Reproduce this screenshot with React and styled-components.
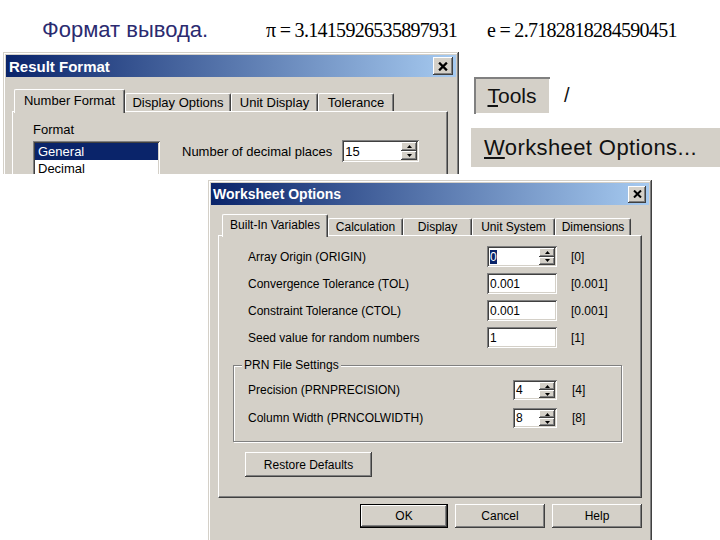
import React from "react";
import styled, { createGlobalStyle, css } from "styled-components";

// Win2000-like bevels
const raised = css`
  box-shadow: inset -1px -1px #404040, inset 1px 1px #fff, inset -2px -2px #808080,
    inset 2px 2px #d4d0c8;
`;
const sunken = css`
  box-shadow: inset 1px 1px #808080, inset -1px -1px #fff, inset 2px 2px #404040,
    inset -2px -2px #d4d0c8;
`;

const GlobalStyle = createGlobalStyle`
  html, body { margin: 0; padding: 0; background: #fff; }
  body { font-family: "Liberation Sans", Arial, sans-serif; }
`;

const Page = styled.div`
  width: 720px;
  height: 540px;
  overflow: hidden;
  background: #fff;
`;

const Header = styled.header`
  display: flex;
  align-items: baseline;
  height: 52px;
  box-sizing: border-box;
  padding: 17px 0 0 42px;
`;

const Heading = styled.h1`
  margin: 0;
  width: 224px;
  font: normal 22px "Liberation Sans", Arial, sans-serif;
  color: #2b2b70;
`;

const Constant = styled.span`
  width: ${(p) => p.$w || 230}px;
  font-family: "Liberation Serif", "Times New Roman", serif;
  font-size: 20px;
  letter-spacing: -0.7px;
  color: #000;
`;

const TopRow = styled.div`
  display: flex;
  align-items: flex-start;
  height: 122px;
`;

const Crop = styled.div`
  margin-left: 3px;
  height: 122px;
  overflow: hidden;
`;

const Dialog = styled.section`
  box-sizing: border-box;
  width: ${(p) => p.$w}px;
  height: ${(p) => p.$h}px;
  padding: 3px;
  background: #d4d0c8;
  font-family: "Liberation Sans", Arial, sans-serif;
  font-size: ${(p) => p.$size}px;
  color: #000;
  box-shadow: inset -1px -1px #404040, inset 1px 1px #d4d0c8, inset -2px -2px #808080,
    inset 2px 2px #fff;
`;

const WorksheetDialog = styled(Dialog)`
  margin: 6px 0 0 208px;
`;

const TitleBar = styled.div`
  display: flex;
  align-items: center;
  justify-content: space-between;
  height: 22px;
  padding: 0 3px 0 ${(p) => p.$pl || 2}px;
  background: linear-gradient(to right, #0a246a, #a6caf0);
  color: #fff;
  font-weight: bold;
  font-size: ${(p) => p.$size}px;
`;

const CloseButton = styled.div`
  display: flex;
  align-items: center;
  justify-content: center;
  width: ${(p) => p.$w}px;
  height: ${(p) => p.$h}px;
  background: #d4d0c8;
  ${raised};
`;

const Body = styled.div`
  padding: ${(p) => p.$pad};
`;

const TabStrip = styled.div`
  display: flex;
  align-items: flex-end;
  padding-left: ${(p) => p.$pl}px;
  position: relative;
  z-index: 1;
`;

const Tab = styled.div`
  box-sizing: border-box;
  display: flex;
  align-items: center;
  justify-content: center;
  width: ${(p) => p.$w}px;
  height: ${(p) => (p.$active ? p.$h + 2 : p.$h - 4)}px;
  margin-bottom: ${(p) => (p.$active ? -2 : 0)}px;
  padding-bottom: ${(p) => (p.$active ? 3 : 0)}px;
  background: #d4d0c8;
  border-top: 1px solid #fff;
  border-left: 1px solid #fff;
  border-right: 1px solid #404040;
  border-radius: 2px 2px 0 0;
  box-shadow: inset -1px 0 #808080;
  white-space: nowrap;
`;

const TabPanel = styled.div`
  box-sizing: border-box;
  height: ${(p) => p.$h}px;
  padding: ${(p) => p.$pad};
  border-top: 1px solid #fff;
  border-left: 1px solid #fff;
  border-right: 1px solid #404040;
  border-bottom: 1px solid #404040;
  box-shadow: inset -1px -1px #808080;
`;

/* Result Format contents */
const FormatRow = styled.div`
  display: flex;
  align-items: flex-start;
`;

const FormatColumn = styled.div`
  display: flex;
  flex-direction: column;
  gap: 4px;
`;

const ListBox = styled.div`
  box-sizing: border-box;
  width: 127px;
  height: 40px;
  padding: 2px 2px 0;
  background: #fff;
  ${sunken};
`;

const ListItem = styled.div`
  height: 17px;
  line-height: 17px;
  padding-left: 3px;
  background: ${(p) => (p.$selected ? "#0a246a" : "transparent")};
  color: ${(p) => (p.$selected ? "#fff" : "#000")};
`;

const DecimalsRow = styled.div`
  display: flex;
  align-items: center;
  gap: 10px;
  margin: 18px 0 0 22px;
`;

/* Edit & spin controls */
const Field = styled.div`
  box-sizing: border-box;
  display: flex;
  width: ${(p) => p.$w}px;
  height: ${(p) => p.$h}px;
  padding: 2px;
  background: #fff;
  ${sunken};
`;

const FieldText = styled.span`
  flex: 1;
  display: flex;
  align-items: center;
  padding-left: 1px;
`;

const Highlight = styled.span`
  background: #0a246a;
  color: #fff;
`;

const SpinButtons = styled.div`
  display: flex;
  flex-direction: column;
  width: 16px;
`;

const SpinButton = styled.div`
  flex: 1;
  display: flex;
  align-items: center;
  justify-content: center;
  background: #d4d0c8;
  ${raised};
`;

/* Worksheet Options contents */
const SettingsGrid = styled.div`
  display: grid;
  grid-template-columns: ${(p) => p.$label}px ${(p) => p.$field}px auto;
  column-gap: ${(p) => p.$gap}px;
  row-gap: ${(p) => p.$rowGap}px;
  align-items: center;
  margin-left: ${(p) => p.$ml || 0}px;
`;

const Default = styled.span`
  white-space: nowrap;
`;

const GroupBox = styled.fieldset`
  box-sizing: border-box;
  width: 389px;
  margin: 10px 0 0 0;
  padding: 8px 0 13px 14px;
  border: 1px solid #808080;
  box-shadow: 1px 1px 0 #fff, inset 1px 1px 0 #fff;
`;

const GroupLegend = styled.legend`
  margin-left: -6px;
  padding: 0 2px;
  background: #d4d0c8;
  line-height: 14px;
`;

const PushButton = styled.button`
  box-sizing: border-box;
  width: ${(p) => p.$w}px;
  height: ${(p) => p.$h}px;
  margin: 0;
  padding: 0;
  border: 0;
  background: #d4d0c8;
  font: 12px "Liberation Sans", Arial, sans-serif;
  color: #000;
  ${(p) =>
    p.$default
      ? css`
          box-shadow: inset 0 0 0 1px #000, inset -2px -2px #404040, inset 2px 2px #fff,
            inset -3px -3px #808080;
        `
      : raised};
`;

const RestoreButton = styled(PushButton)`
  display: block;
  margin: 10px 0 0 12px;
`;

const Footer = styled.div`
  display: flex;
  justify-content: flex-end;
  gap: 7px;
  margin-top: 6px;
`;

/* Right-hand menu excerpt */
const MenuColumn = styled.div`
  display: flex;
  flex-direction: column;
  margin-left: 12px;
  padding-top: 25px;
`;

const MenuRow = styled.div`
  display: flex;
  align-items: center;
  margin-left: 3px;
`;

const ToolsBox = styled.div`
  box-sizing: border-box;
  display: flex;
  align-items: center;
  justify-content: center;
  width: 76px;
  height: 37px;
  background: #d4d0c8;
  font-size: 21px;
  color: #111;
  box-shadow: inset 2px 2px #808080, inset -1px -1px #fff;
`;

const Slash = styled.span`
  margin-left: 14px;
  font-size: 20px;
  color: #111;
`;

const MenuItem = styled.div`
  box-sizing: border-box;
  display: flex;
  align-items: center;
  width: 249px;
  height: 39px;
  margin-top: 14px;
  padding-left: 13px;
  background: #d4d0c8;
  font-size: 22px;
  letter-spacing: 0.4px;
  color: #111;
`;

const CloseIcon = ({ size = 9 }) => (
  <svg width={size} height={size - 1} viewBox="0 0 9 8">
    <path d="M1 0.5 L8 7.5 M8 0.5 L1 7.5" stroke="#000" strokeWidth="2" />
  </svg>
);

const Arrow = ({ up }) => (
  <svg width="5" height="3" viewBox="0 0 5 3">
    <path d={up ? "M2.5 0 L5 3 L0 3 Z" : "M0 0 L5 0 L2.5 3 Z"} fill="#000" />
  </svg>
);

function Spin({ w, h, children }) {
  return (
    <Field $w={w} $h={h}>
      <FieldText>{children}</FieldText>
      <SpinButtons>
        <SpinButton>
          <Arrow up />
        </SpinButton>
        <SpinButton>
          <Arrow />
        </SpinButton>
      </SpinButtons>
    </Field>
  );
}

const resultTabs = [
  ["Number Format", 111],
  ["Display Options", 106],
  ["Unit Display", 87],
  ["Tolerance", 76],
];

const worksheetTabs = [
  ["Built-In Variables", 106],
  ["Calculation", 75],
  ["Display", 69],
  ["Unit System", 83],
  ["Dimensions", 76],
];

const variables = [
  ["Array Origin  (ORIGIN)", "0", "[0]", true],
  ["Convergence Tolerance  (TOL)", "0.001", "[0.001]"],
  ["Constraint Tolerance  (CTOL)", "0.001", "[0.001]"],
  ["Seed value for random numbers", "1", "[1]"],
];

const prnSettings = [
  ["Precision  (PRNPRECISION)", "4", "[4]"],
  ["Column Width  (PRNCOLWIDTH)", "8", "[8]"],
];

function App() {
  return (
    <>
      <GlobalStyle />
      <Page>
        <Header>
          <Heading>Формат вывода.</Heading>
          <Constant $w={221}>π = 3.1415926535897931</Constant>
          <Constant>e = 2.7182818284590451</Constant>
        </Header>

        <TopRow>
          <Crop>
            <Dialog $w={456} $h={200} $size={13}>
              <TitleBar $size={15} $pl={3}>
                Result Format
                <CloseButton $w={20} $h={18}>
                  <CloseIcon size={10} />
                </CloseButton>
              </TitleBar>
              <Body $pad="12px 8px 0 6px">
                <TabStrip $pl={2}>
                  {resultTabs.map(([label, w], i) => (
                    <Tab key={label} $w={w} $h={22} $active={i === 0}>
                      {label}
                    </Tab>
                  ))}
                </TabStrip>
                <TabPanel $h={120} $pad="10px 0 0 20px">
                  <FormatRow>
                    <FormatColumn>
                      <span>Format</span>
                      <ListBox>
                        <ListItem $selected>General</ListItem>
                        <ListItem>Decimal</ListItem>
                      </ListBox>
                    </FormatColumn>
                    <DecimalsRow>
                      <span>Number of decimal places</span>
                      <Spin w={77} h={22}>15</Spin>
                    </DecimalsRow>
                  </FormatRow>
                </TabPanel>
              </Body>
            </Dialog>
          </Crop>

          <MenuColumn>
            <MenuRow>
              <ToolsBox>
                <span>
                  <u>T</u>ools
                </span>
              </ToolsBox>
              <Slash>/</Slash>
            </MenuRow>
            <MenuItem>
              <span>
                <u>W</u>orksheet Options...
              </span>
            </MenuItem>
          </MenuColumn>
        </TopRow>

        <WorksheetDialog $w={444} $h={380} $size={12}>
          <TitleBar $size={14}>
            Worksheet Options
            <CloseButton $w={18} $h={17}>
              <CloseIcon />
            </CloseButton>
          </TitleBar>
          <Body $pad="9px 7px 0 7px">
            <TabStrip $pl={4}>
              {worksheetTabs.map(([label, w], i) => (
                <Tab key={label} $w={w} $h={21} $active={i === 0}>
                  {label}
                </Tab>
              ))}
            </TabStrip>
            <TabPanel $h={263} $pad="10px 0 0 14px">
              <SettingsGrid $label={225} $field={70} $gap={14} $rowGap={6} $ml={15}>
                {variables.map(([label, value, def, spin]) => (
                  <React.Fragment key={label}>
                    <span>{label}</span>
                    {spin ? (
                      <Spin w={70} h={21}>
                        <Highlight>{value}</Highlight>
                      </Spin>
                    ) : (
                      <Field $w={70} $h={21}>
                        <FieldText>{value}</FieldText>
                      </Field>
                    )}
                    <Default>{def}</Default>
                  </React.Fragment>
                ))}
              </SettingsGrid>

              <GroupBox>
                <GroupLegend>PRN File Settings</GroupLegend>
                <SettingsGrid $label={250} $field={44} $gap={15} $rowGap={8}>
                  {prnSettings.map(([label, value, def]) => (
                    <React.Fragment key={label}>
                      <span>{label}</span>
                      <Spin w={44} h={20}>{value}</Spin>
                      <Default>{def}</Default>
                    </React.Fragment>
                  ))}
                </SettingsGrid>
              </GroupBox>

              <RestoreButton $w={127} $h={25}>
                Restore Defaults
              </RestoreButton>
            </TabPanel>

            <Footer>
              <PushButton $w={88} $h={24} $default>
                OK
              </PushButton>
              <PushButton $w={90} $h={24}>
                Cancel
              </PushButton>
              <PushButton $w={90} $h={24}>
                Help
              </PushButton>
            </Footer>
          </Body>
        </WorksheetDialog>
      </Page>
    </>
  );
}

export default App;
